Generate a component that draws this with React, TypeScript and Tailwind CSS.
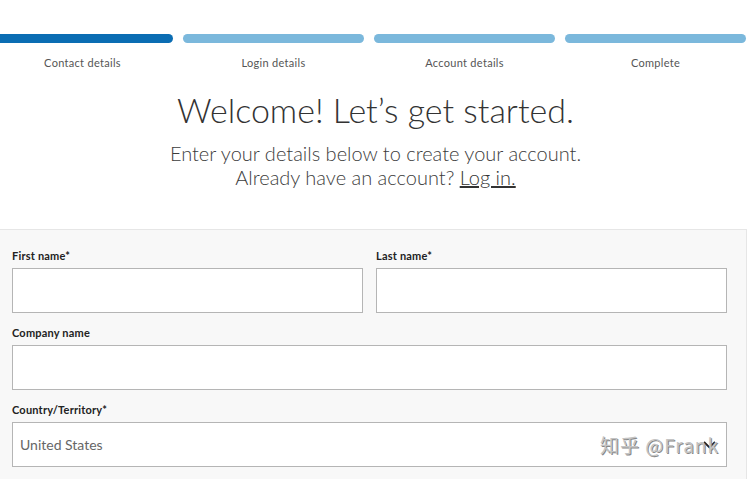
const steps = ["Contact details", "Login details", "Account details", "Complete"];

function Field({ label, children }: { label: string; children?: React.ReactNode }) {
  return (
    <div className="flex flex-col">
      <label className="text-[11px] font-bold text-[#222] leading-[12px] mb-[6px] tracking-[0.2px]">{label}</label>
      <div className="h-[45px] bg-white border border-[#b5b5b5] flex items-center relative">{children}</div>
    </div>
  );
}

export default function App() {
  return (
    <div className="w-[751px] h-[479px] overflow-hidden bg-white font-['Lato',sans-serif] text-[#333]">
      <div className="ml-[-8px] w-[754px] grid grid-cols-4 gap-[10px] pt-[34px]">
        {steps.map((s, i) => (
          <div key={s} className="flex flex-col items-center">
            <div className={`h-[9px] w-full rounded-full ${i === 0 ? "bg-[#0b6db3]" : "bg-[#7bb8dc]"}`} />
            <span className="mt-[13px] text-[11px] leading-[14px] text-[#555] tracking-[0.3px]">{s}</span>
          </div>
        ))}
      </div>

      <div className="flex flex-col items-center mt-[20px]">
        <h1 className="text-[34px] leading-[40px] font-light text-[#333]">Welcome! Let’s get started.</h1>
        <p className="mt-[11px] text-[20px] leading-[24px] font-light text-[#3c3c3c] text-center">
          Enter your details below to create your account.
          <br />
          Already have an account? <a className="underline text-[#333]">Log in.</a>
        </p>
      </div>

      <div className="mt-[40px] w-[747px] h-[260px] bg-[#f8f8f8] border-t border-r border-[#e6e6e6] px-[12px] pt-[20px] flex flex-col gap-[14px]">
        <div className="grid grid-cols-2 gap-[13px] w-[715px]">
          <Field label="First name*" />
          <Field label="Last name*" />
        </div>
        <div className="w-[715px]">
          <Field label="Company name" />
        </div>
        <div className="w-[715px]">
          <Field label="Country/Territory*">
            <span className="pl-[7px] text-[14px] text-[#666]">United States</span>
            <svg className="absolute right-[10px] top-[18px]" width="13" height="8" viewBox="0 0 13 8">
              <path d="M1 1 L6.5 6.5 L12 1" stroke="#222" strokeWidth="1.8" fill="none" />
            </svg>
            <span className="absolute left-[587px] top-[10px] whitespace-nowrap text-[19px] leading-[24px] text-[#c4c4c4] font-['Noto_Sans_CJK_SC',sans-serif] tracking-[1px] [text-shadow:1px_1px_0_#888]">知乎 @Frank</span>
          </Field>
        </div>
      </div>
    </div>
  );
}
